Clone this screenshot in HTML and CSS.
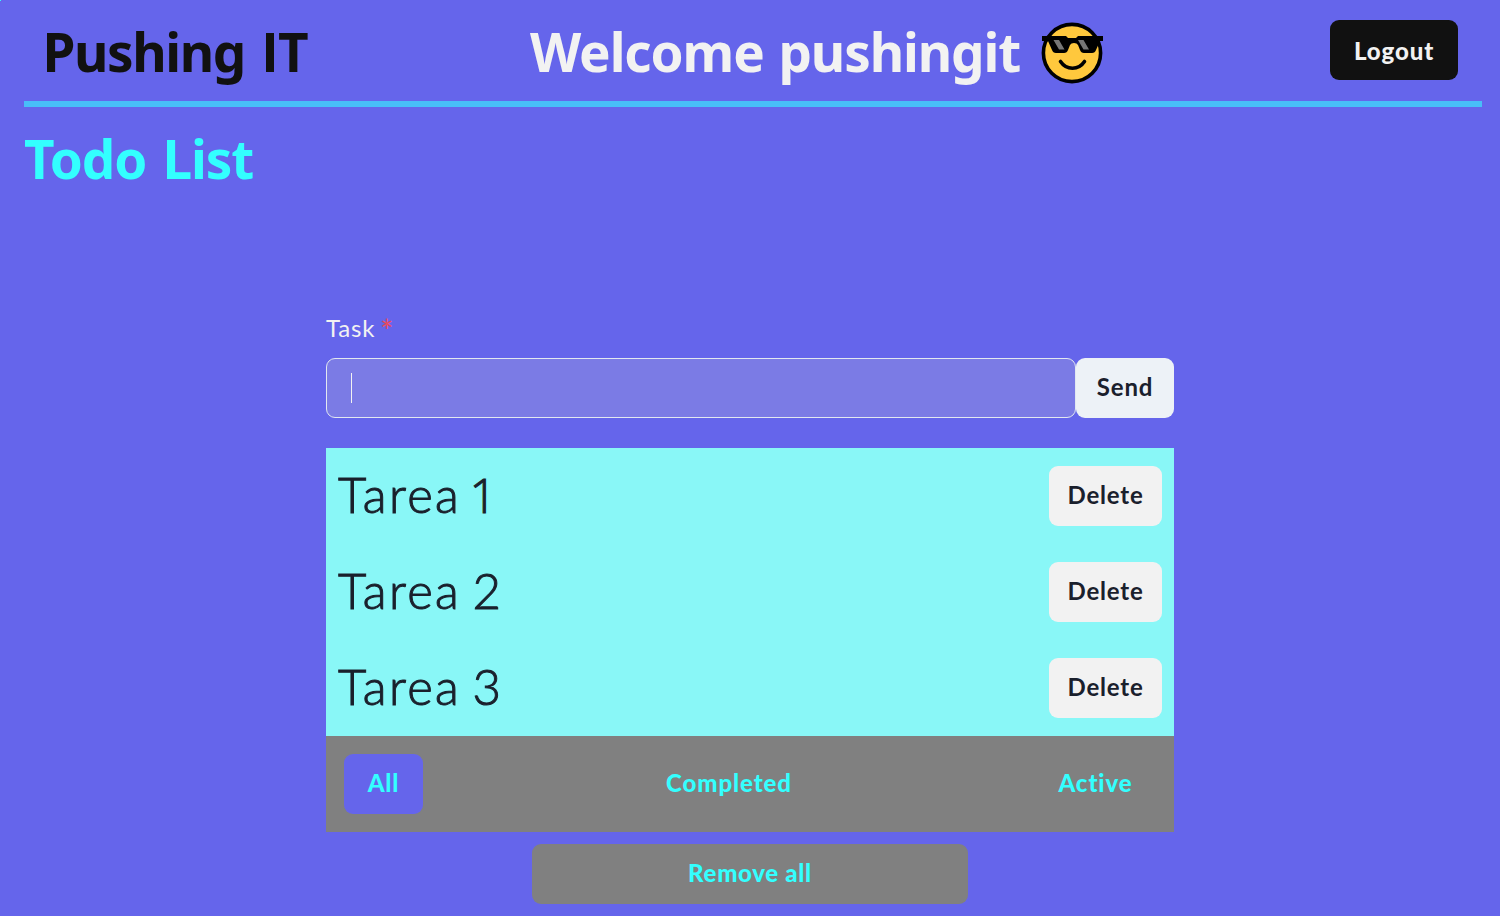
FILE: index.html
```html
<!DOCTYPE html>
<html lang="en">
<head>
<meta charset="utf-8">
<title>Todo List</title>
<link rel="stylesheet" href="styles.css">
</head>
<body>
<header class="header">
  <h1 class="brand">Pushing <span class="brand-suffix">IT</span></h1>
  <div class="welcome">
    <h2 class="welcome-text">Welcome pushingit</h2>
    <svg class="emoji" viewBox="0 0 62 62" aria-hidden="true">
      <circle cx="31" cy="31" r="28.6" fill="#ffc83d" stroke="#000" stroke-width="3.6"/>
      <path d="M1 14h24l2 2h8l2-2h25v5h-3l-4 9q-1 3-4 3h-8q-3 0-4-3l-2-5q-1-2-4-2t-4 2l-2 5q-1 3-4 3h-8q-3 0-4-3l-4-9H1z" fill="#000"/>
      <path d="M12.500 18h5.500l5.500 9.500h-5.500zM37 18h5.500l5.500 9.500h-5.500z" fill="#767676"/>
      <path d="M19.500 39.500q4.500 6.700 12 6.700t12-6.700" fill="none" stroke="#000" stroke-width="3.600" stroke-linecap="round"/>
    </svg>
  </div>
  <button class="btn btn-logout">Logout</button>
</header>
<main class="main">
  <h2 class="page-title">Todo List</h2>
  <section class="todo">
    <label class="label" for="task">Task <span class="required">*</span></label>
    <form class="task-form">
      <div class="field" id="task"><span class="caret"></span></div>
      <button class="btn btn-send" type="button">Send</button>
    </form>
    <ul class="tasks">
      <li class="task"><span class="task-name">Tarea <span class="digit-one">1</span></span><button class="btn btn-delete">Delete</button></li>
      <li class="task"><span class="task-name">Tarea 2</span><button class="btn btn-delete">Delete</button></li>
      <li class="task"><span class="task-name">Tarea 3</span><button class="btn btn-delete">Delete</button></li>
    </ul>
    <nav class="filters">
      <button class="btn filter filter-on">All</button>
      <button class="btn filter filter-completed">Completed</button>
      <button class="btn filter filter-active">Active</button>
    </nav>
    <button class="btn btn-remove">Remove all</button>
  </section>
</main>
</body>
</html>
```
FILE: styles.css
```css
* { box-sizing: border-box; margin: 0; padding: 0; }
body {
  height: 916px;
  overflow: hidden;
  background: linear-gradient(#3ff, #3ff) 0 0 / 1px 1px no-repeat #6565eb;
  font-family: Lato, sans-serif;
  font-size: 24px;
  color: #1a202c;
}
.header {
  display: grid;
  grid-template-columns: 506px 1fr 128px;
  height: 107px;
  margin: 0 18px 0 24px;
  padding: 20px 24px 0 0;
  border-bottom: 6px solid #48bef8;
}
.brand, .welcome-text, .page-title {
  font-family: "Noto Sans", sans-serif;
  font-size: 53px;
  font-weight: 700;
  line-height: 64px;
  white-space: nowrap;
}
.brand { padding-left: 18.500px; color: #111; letter-spacing: -1.4px; word-spacing: 4px; }
.brand-suffix { font-family: "Open Sans", sans-serif; letter-spacing: -0.8px; }
.welcome { display: flex; }
.welcome-text { width: 511px; color: #f2f2f2; letter-spacing: -1.1px; word-spacing: 2px; }
.emoji { width: 62px; height: 62px; margin-top: 2px; }
.btn {
  height: 60px;
  padding-bottom: 2px;
  border: 0;
  border-radius: 9px;
  font: 700 24px/58px Lato, sans-serif;
  letter-spacing: 0.8px;
  font-variant-ligatures: none;
  color: #1a202c;
  text-align: center;
  white-space: nowrap;
}
.btn-logout { padding: 1px 0 0; background: #111; color: #f2f2f2; font-weight: 900; letter-spacing: 0.9px; }
.page-title { height: 66px; margin: 20px 0 0 24px; color: #3ff; letter-spacing: -1.1px; word-spacing: 3.500px; }
.todo { display: flex; flex-direction: column; width: 848px; margin: 118px auto 0; }
.label { height: 47px; line-height: 34px; letter-spacing: 0.8px; color: #f2f2f2; }
.required { font-size: 32px; line-height: 20px; vertical-align: -6px; margin-left: -2px; color: #e54b60; }
.task-form { display: flex; margin-bottom: 30px; }
.field {
  display: flex;
  align-items: center;
  width: 750px;
  height: 60px;
  padding-left: 24px;
  border: 1px solid #e2e8f0;
  border-radius: 9px;
  background: #7b7be5;
}
.caret { width: 1px; height: 30px; background: #f2f2f2; }
.btn-send { width: 98px; background: #edf2f7; }
.tasks { list-style: none; background: #89f7f7; }
.task {
  display: flex;
  align-items: center;
  justify-content: space-between;
  height: 96px;
  padding: 0 12px;
}
.task-name {
  margin-top: -5px;
  font-size: 49px;
  font-weight: 300;
  line-height: 72px;
  letter-spacing: 2.3px;
  word-spacing: -4px;
  -webkit-text-stroke: 1px #1a202c;
}
.digit-one {
  margin-left: -3px;
  font-family: "Open Sans", sans-serif;
  font-size: 48px;
  line-height: 1;
}
.btn-delete { width: 113px; background: #f2f2f2; }
.filters {
  display: flex;
  align-items: center;
  justify-content: space-between;
  height: 96px;
  padding: 0 18px;
  background: #808080;
}
.filter, .btn-remove { color: #3ff; font-weight: 900; letter-spacing: 0.9px; }
.filter { background: transparent; }
.filter-on { width: 79px; background: #6565eb; }
.filter-completed { width: 175px; }
.filter-active { width: 121px; }
.btn-remove { align-self: center; width: 436px; margin-top: 12px; background: #808080; letter-spacing: 0.7px; }
```
